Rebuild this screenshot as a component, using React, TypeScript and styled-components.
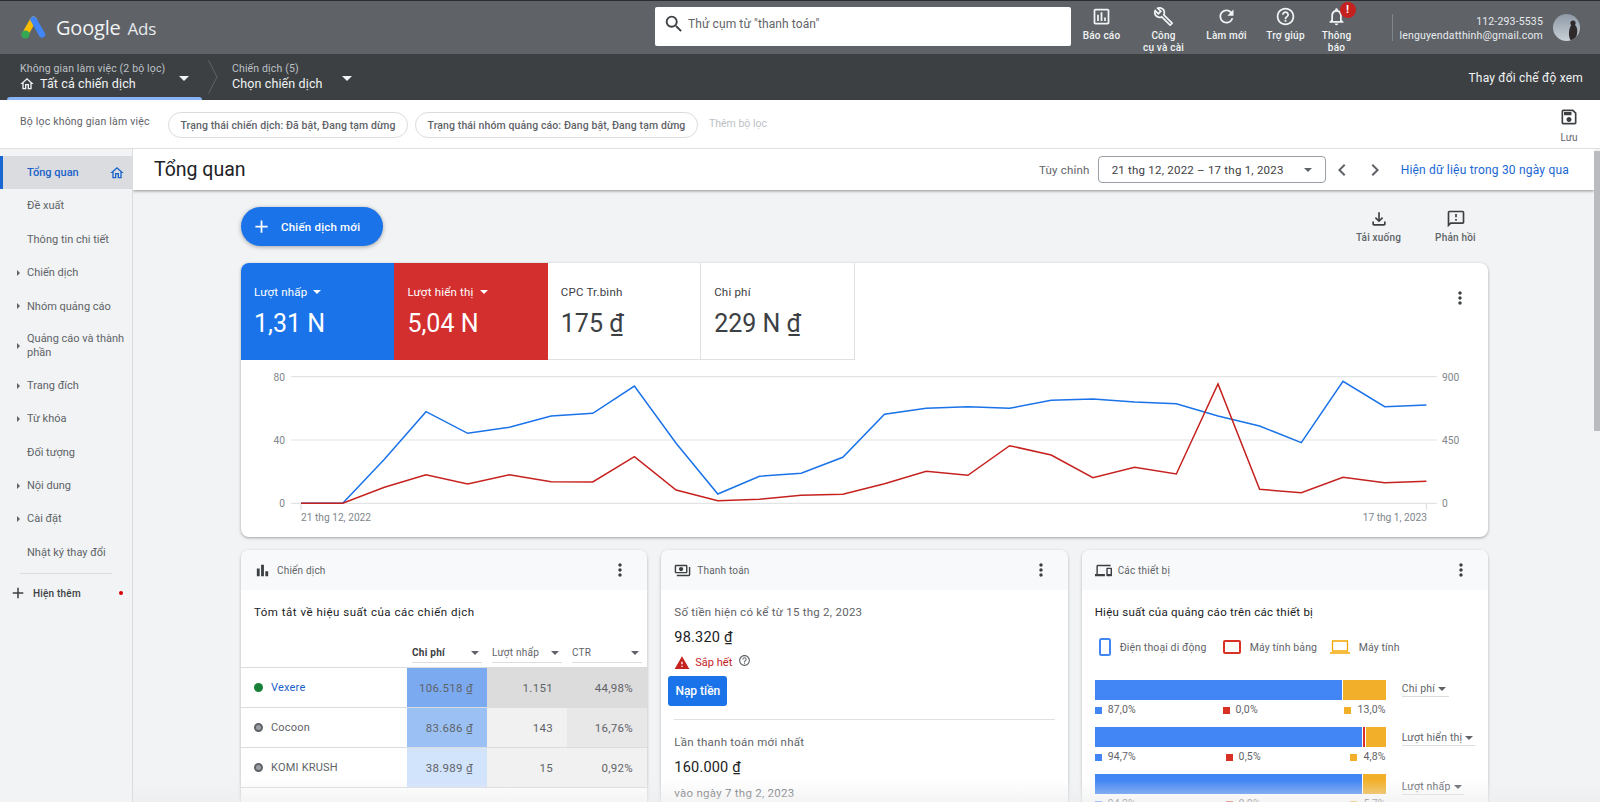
import React from "react";
import styled, { createGlobalStyle } from "styled-components";
import {
  MdOutlineAssessment, MdOutlineBuild, MdRefresh, MdHelpOutline, MdOutlineNotifications,
  MdOutlineSave, MdOutlineHome, MdAdd, MdOutlineFileDownload, MdOutlineFeedback, MdMoreVert,
  MdBarChart, MdOutlinePayments, MdOutlineDevices, MdChevronLeft, MdChevronRight, MdWarning,
  MdSearch,
} from "react-icons/md";

const Global = createGlobalStyle`
  html, body { margin: 0; padding: 0; height: 100%; overflow: hidden; background: #fff; }
  body { font-family: Roboto, "Noto Sans", "Liberation Sans", sans-serif; color: #3c4043; }
  * { box-sizing: border-box; }
`;

const Page = styled.div`
  width: 1600px; height: 802px; display: flex; flex-direction: column; overflow: hidden; position: relative;
`;

/* ---------- top bar ---------- */
const TopBar = styled.header`
  height: 54px; flex: none; display: flex; align-items: stretch; background: #5f6368; border-top: 1px solid #2b2d30; color: #fff;
`;
const Brand = styled.div`
  width: 655px; display: flex; align-items: center; padding-left: 21px; gap: 10px;
`;
const BrandName = styled.span`
  font-family: "Open Sans", Roboto, sans-serif; font-size: 20px; color: #f1f3f4; letter-spacing: -0.2px;
  & > b { font-weight: 400; margin-left: 7px; font-size: 17px; color: #e8eaed; }
`;
const SearchBox = styled.div`
  width: 416px; height: 39px; margin-top: 6px; background: #fff; border-radius: 2px; display: flex; align-items: center;
  padding: 0 0 5px 8px; gap: 3px; font-size: 12px; color: #5f6368; letter-spacing: 0.1px;
  & svg { font-size: 22px; color: #3c4043; }
`;
const ActionItem = styled.div<{ $w: number }>`
  width: ${p => p.$w}px; display: flex; flex-direction: column; align-items: center; text-align: center; padding-top: 5px;
  font-size: 10px; font-weight: 500; line-height: 12px; letter-spacing: 0.2px; color: #f1f3f4; position: relative;
  & > svg { font-size: 21px; margin-bottom: 3px; flex: none; }
`;
const Badge = styled.span`
  position: absolute; top: 1px; left: 50%; margin-left: 3px; width: 16px; height: 16px; border-radius: 50%;
  background: #c5221f; color: #fff; font-size: 11px; font-weight: 700; line-height: 16px; text-align: center;
`;
const VDivider = styled.div`
  width: 1px; height: 27px; background: #80868b; margin: 13px 0 0 32px;
`;
const Account = styled.div`
  width: 150px; margin-top: 14px; text-align: right; font-size: 10.5px; line-height: 13.5px; letter-spacing: 0.17px; color: #e8eaed;
`;
const Avatar = styled.svg`
  width: 27px; height: 27px; margin: 13px 0 0 10px; border-radius: 50%; flex: none;
`;

/* ---------- context bar ---------- */
const ContextBar = styled.div`
  height: 46px; flex: none; display: flex; align-items: stretch; background: #3c4043; color: #f1f3f4; position: relative;
`;
const Crumb = styled.div<{ $w: number; $pad: number }>`
  width: ${p => p.$w}px; padding-left: ${p => p.$pad}px; position: relative; display: flex; flex-direction: column; padding-top: 8px;
`;
const CrumbLabel = styled.span`
  font-size: 10.5px; line-height: 14px; color: #bdc1c6; letter-spacing: 0.15px;
`;
const CrumbValue = styled.span`
  font-size: 12.5px; line-height: 16px; letter-spacing: 0.12px; color: #f1f3f4; display: flex; align-items: center; gap: 5px;
  & svg { font-size: 16px; margin-left: -1px; }
`;
const Caret = styled.span<{ $left: number }>`
  position: absolute; left: ${p => p.$left}px; top: 22px; border: 5px solid transparent; border-top-color: #f1f3f4; border-bottom: 0;
`;
const ActiveTab = styled.span`
  position: absolute; left: 7px; bottom: 0; width: 195px; height: 3px; background: #8ab4f8; border-radius: 3px 3px 0 0;
`;
const CrumbSep = styled.svg`
  width: 10px; height: 34px; margin: 6px 14px 0 3px; flex: none;
`;
const ViewSwitch = styled.div`
  margin-left: auto; padding: 17px 17px 0 0; font-size: 12px; letter-spacing: 0.2px; color: #f1f3f4;
`;

/* ---------- filter bar ---------- */
const FilterBar = styled.div`
  height: 49px; flex: none; display: flex; align-items: flex-start; background: #fff; border-bottom: 1px solid #e0e0e0; position: relative;
`;
const FilterLabel = styled.div`
  font-size: 10.5px; color: #5f6368; padding: 15px 0 0 20px; width: 168px; letter-spacing: 0.2px;
`;
const Chip = styled.div<{ $w: number }>`
  width: ${p => p.$w}px; height: 26px; margin: 12px 7px 0 0; border: 1px solid #dadce0; border-radius: 13px; font-size: 10.5px;
  font-weight: 500; color: #5f6368; display: flex; align-items: center; justify-content: center; white-space: nowrap; letter-spacing: 0.1px;
`;
const AddFilter = styled.div`
  font-size: 10.5px; color: #bdc1c6; padding: 17px 0 0 4px;
`;
const SaveAction = styled.div`
  margin-left: auto; margin-right: 21px; padding-top: 7px; display: flex; flex-direction: column; align-items: center; font-size: 10px; color: #5f6368; gap: 5px;
  & svg { font-size: 20px; color: #3c4043; }
`;

/* ---------- body ---------- */
const Body = styled.div`
  flex: 1; min-height: 0; display: flex;
`;
const Sidebar = styled.nav`
  width: 133px; flex: none; background: #f1f3f4; border-right: 1px solid #dadce0; padding-top: 7px;
`;
const NavRow = styled.div<{ $active?: boolean; $expand?: boolean; $tall?: boolean }>`
  height: ${p => (p.$tall ? 46 : 33.4)}px; display: flex; align-items: center; padding: 0 0 0 27px; position: relative;
  font-size: 11px; line-height: 13.5px;
  color: ${p => (p.$active ? "#1a62c9" : "#5f6368")}; font-weight: ${p => (p.$active ? 500 : 400)};
  background: ${p => (p.$active ? "#dadce0" : "transparent")};
  border-left: ${p => (p.$active ? "3px solid #1967d2" : "0")};
  ${p => p.$active && "padding-left: 24px;"}
  ${p => p.$expand && `&::before { content: ""; position: absolute; left: 17px; top: 50%; margin-top: -3px; border: 3px solid transparent; border-left: 3px solid #5f6368; border-right: 0; }`}
  & svg { position: absolute; right: 7px; font-size: 16px; color: #1a62c9; }
`;
const NavDivider = styled.div`
  height: 1px; background: #dadce0; margin: 4px 20px 0 20px;
`;
const ShowMore = styled.div`
  display: flex; align-items: center; height: 38px; padding-left: 9px; font-size: 10px; font-weight: 500; letter-spacing: 0.2px; color: #3c4043; gap: 6px; position: relative;
  & svg { font-size: 18px; }
`;
const RedDot = styled.span`
  position: absolute; left: 119px; top: 17px; width: 4px; height: 4px; border-radius: 50%; background: #d50000;
`;

const Main = styled.main`
  flex: 1; min-width: 0; display: flex; flex-direction: column; background: #f1f3f4; position: relative; overflow: hidden;
`;
const TitleBar = styled.div`
  height: 41px; flex: none; background: #fff; display: flex; align-items: center; padding: 0 25px 0 21px; box-shadow: 0 1px 3px rgba(60,64,67,.55); position: relative; z-index: 1;
  margin-right: 6px;
`;
const PageTitle = styled.h1`
  margin: 0; font-size: 19.5px; font-weight: 400; color: #202124; flex: 1;
`;
const CustomLabel = styled.span`
  font-size: 11.5px; color: #5f6368; margin-right: 8px; letter-spacing: 0.2px;
`;
const DateBox = styled.div`
  width: 228px; height: 27px; border: 1px solid #9aa0a6; border-radius: 4px; display: flex; align-items: center; padding-left: 13px; font-size: 11.5px; color: #3c4043; position: relative; letter-spacing: 0.22px;
`;
const DateCaret = styled.span`
  position: absolute; right: 13px; top: 11px; border: 4px solid transparent; border-top-color: #5f6368; border-bottom: 0;
`;
const PageArrow = styled.span`
  width: 33px; display: flex; justify-content: center; color: #5f6368; font-size: 24px;
  & svg { display: block; }
`;
const RangeLink = styled.span`
  font-size: 12px; color: #1967d2; margin-left: 9px; letter-spacing: 0.2px;
`;
const Content = styled.div`
  padding: 17px 112px 0 108px;
`;
const ToolRow = styled.div`
  height: 39px; display: flex; align-items: flex-start; margin: 0 -6px 17px 0;
`;
const NewButton = styled.div`
  width: 142px; height: 39px; border-radius: 20px; background: #1a73e8; color: #fff; display: flex; align-items: center; padding-left: 10px; gap: 9px;
  font-size: 11.5px; font-weight: 500; letter-spacing: 0.2px; box-shadow: 0 1px 4px rgba(60,64,67,.45);
  & svg { font-size: 21px; }
`;
const ToolAction = styled.div<{ $w: number; $first?: boolean }>`
  width: ${p => p.$w}px; ${p => p.$first && "margin-left: auto;"} display: flex; flex-direction: column; align-items: center; font-size: 10px; font-weight: 500; color: #5f6368; gap: 3px; margin-top: 2px; letter-spacing: 0.2px;
  & svg { font-size: 20px; color: #3c4043; }
`;
const ChartCard = styled.section`
  height: 274px; background: #fff; border-radius: 8px; box-shadow: 0 1px 3px rgba(60,64,67,.45); overflow: hidden; margin-bottom: 13px;
`;
const TileRow = styled.div`
  display: flex; height: 97px; position: relative;
`;
const Tile = styled.div<{ $bg?: string }>`
  width: 153.4px; padding: 21px 0 0 13px; background: ${p => p.$bg || "#fff"}; color: ${p => (p.$bg ? "#fff" : "#3c4043")};
  border-right: ${p => (p.$bg ? "0" : "1px solid #e0e0e0")}; border-bottom: ${p => (p.$bg ? "0" : "1px solid #e0e0e0")};
`;
const TileLabel = styled.div`
  font-size: 11.5px; line-height: 16px; display: flex; align-items: center; gap: 6px; letter-spacing: 0.2px;
`;
const TileCaret = styled.span`
  border: 4px solid transparent; border-top-color: currentColor; border-bottom: 0;
`;
const TileValue = styled.div`
  font-size: 25px; line-height: 32px; margin-top: 8px; font-weight: 400; color: inherit;
`;
const MoreBtn = styled.span`
  color: #3c4043; font-size: 20px; line-height: 0; margin-left: auto;
  & svg { display: block; }
`;
const TileMenu = styled.div`
  margin-left: auto; padding: 25px 18px 0 0;
`;
const ChartSvg = styled.svg`
  display: block; width: 100%; height: 177px;
`;
const AxisText = styled.text`
  font-family: Roboto, sans-serif; font-size: 10.2px; fill: #80868b;
`;

const CardGrid = styled.div`
  display: grid; grid-template-columns: repeat(3, 1fr); gap: 14px;
`;
const Card = styled.section`
  height: 300px; background: #fff; border-radius: 8px 8px 0 0; box-shadow: 0 1px 3px rgba(60,64,67,.35); overflow: hidden;
`;
const CardHead = styled.div`
  height: 40px; background: #f8f9fa; display: flex; align-items: center; padding: 0 17px 0 13px; gap: 6px; font-size: 10px; color: #5f6368; letter-spacing: 0.2px;
  & > svg { font-size: 17px; color: #3c4043; }
`;
const CardTitle = styled.div<{ $strong?: boolean; $spacing?: number }>`
  font-size: 11.5px; line-height: 16px; color: ${p => (p.$strong ? "#202124" : "#5f6368")}; padding: 14px 13px 0; letter-spacing: ${p => p.$spacing ?? 0.25}px;
`;
const TableHead = styled.div`
  display: grid; grid-template-columns: 166px 80px 80px 80px; margin-top: 24px; height: 24px; border-bottom: 1px solid #dadce0;
`;
const HeadCell = styled.div<{ $bold?: boolean }>`
  margin: 1px 5px 4px; padding-bottom: 2px; border-bottom: 1px solid #dadce0; display: flex; justify-content: space-between; align-items: center; padding-right: 3px;
  font-size: 10px; letter-spacing: 0.25px; color: ${p => (p.$bold ? "#3c4043" : "#5f6368")}; font-weight: ${p => (p.$bold ? 700 : 400)};
  &:first-child { border: 0; }
`;
const TableRow = styled.div`
  display: grid; grid-template-columns: 166px 80px 80px 80px; height: 40px; border-bottom: 1px solid #dadce0;
`;
const NameCell = styled.div<{ $link?: boolean }>`
  display: flex; align-items: center; padding-left: 13px; gap: 8px; font-size: 11px; letter-spacing: 0.2px; color: ${p => (p.$link ? "#1a62c9" : "#5f6368")};
`;
const StatusDot = styled.span<{ $c: string; $ring: boolean }>`
  width: 9px; height: 9px; border-radius: 50%; background: ${p => p.$c}; ${p => p.$ring && "background: #9aa0a6; border: 2px solid #5f6368;"}
`;
const NumCell = styled.div<{ $bg: string }>`
  background: ${p => p.$bg}; display: flex; align-items: center; justify-content: flex-end; padding-right: 14px; font-size: 11.5px; color: #5f6368; letter-spacing: 0.3px;
`;
const Amount = styled.div<{ $top: number }>`
  font-size: 14.5px; line-height: 20px; color: #202124; padding: ${p => p.$top}px 13px 0; letter-spacing: 0.2px;
`;
const AlertRow = styled.div`
  display: flex; align-items: center; padding: 6px 13px 0; height: 23px; font-size: 11px; color: #c5221f; gap: 5px;
  & > svg { font-size: 16px; }
  & > svg:last-child { color: #5f6368; font-size: 13px; margin: -5px 0 0 1px; }
`;
const TopUp = styled.div`
  width: 59px; height: 30px; margin: 5px 0 0 7px; background: #1a73e8; border-radius: 3px; color: #fff; font-size: 12px; font-weight: 500; display: flex; align-items: center; justify-content: center;
`;
const HLine = styled.div`
  height: 1px; background: #e0e0e0; margin: 13px 13px 0;
`;
const Note = styled.div<{ $top: number }>`
  font-size: 11.5px; line-height: 16px; color: #5f6368; padding: ${p => p.$top}px 13px 0; letter-spacing: 0.25px;
`;
const Legend = styled.div`
  display: flex; align-items: center; height: 20px; margin: 17px 0 0 17px; font-size: 10.5px; color: #5f6368; letter-spacing: 0.12px;
  & > svg { flex: none; }
`;
const LegendText = styled.span<{ $w: number }>`
  width: ${p => p.$w}px; margin-left: 9px;
`;
const DeviceList = styled.div`
  padding: 23px 0 0 13px; display: flex; flex-direction: column; gap: 6px;
`;
const DeviceRow = styled.div`
  display: flex; height: 41px; align-items: flex-start;
`;
const BarCol = styled.div`
  width: 291px; flex: none;
`;
const Bar = styled.div`
  display: flex; height: 20px; gap: 1px;
`;
const BarSeg = styled.div<{ $c: string; $w: number }>`
  background: ${p => p.$c}; width: ${p => p.$w}px; flex: none;
`;
const BarLabels = styled.div`
  display: flex; justify-content: space-between; font-size: 10.5px; color: #5f6368; margin-top: 4px; line-height: 12px; letter-spacing: 0.15px;
`;
const BarLabel = styled.span<{ $c: string }>`
  display: flex; align-items: center; gap: 6px;
  &::before { content: ""; width: 7px; height: 7px; background: ${p => p.$c}; }
`;
const MetricPick = styled.div<{ $w: number; $top: number }>`
  width: ${p => p.$w}px; margin: ${p => p.$top}px 0 0 16px; border-bottom: 1px solid #dadce0; font-size: 10.5px; line-height: 15px; color: #5f6368; display: flex; align-items: center; gap: 3px; white-space: nowrap; letter-spacing: 0.2px;
`;
const PickCaret = styled.span`
  border: 4px solid transparent; border-top: 4px solid #5f6368; border-bottom: 0;
`;
const ScrollTrack = styled.div`
  position: absolute; right: 0; top: 0; bottom: 0; width: 6px; background: #f1f3f4; z-index: 2;
`;
const ScrollThumb = styled.div`
  height: 280px; margin-top: 2px; background: #b9bbbe;
`;
const BottomFade = styled.div`
  position: absolute; left: 0; right: 0; bottom: 0; height: 22px; z-index: 3; pointer-events: none;
  background: linear-gradient(to bottom, rgba(241,243,244,0), rgba(236,237,238,.6));
`;

const blue = [430,430,298,155,220,202,168,160,78,250,402,349,340,292,163,145,140,145,121,117,126,131,168,198,248,64,140,135];
const red = [430,430,382,344,372,344,365,366,290,390,422,418,406,403,371,334,346,257,285,353,322,342,72,388,398,352,368,364];
const toPts = (a: number[]) => a.map((v, i) => `${(60 + i * 41.68).toFixed(1)},${(v / 3).toFixed(1)}`).join(" ");

const Logo = () => (
  <svg width="25" height="23" viewBox="0 0 25 23" aria-hidden="true">
    <path d="M12.5 3.5 5 16.5" stroke="#fbbc04" strokeWidth="6.4" strokeLinecap="round" />
    <path d="M12.5 3.5 21 18.5" stroke="#4285f4" strokeWidth="6.4" strokeLinecap="round" />
    <circle cx="4.4" cy="18.4" r="4" fill="#34a853" />
  </svg>
);

const actions = [
  { w: 61, icon: <MdOutlineAssessment />, text: "Báo cáo" },
  { w: 63, icon: <MdOutlineBuild />, text: <>Công<br />cụ và cài</> },
  { w: 63, icon: <MdRefresh />, text: "Làm mới" },
  { w: 55, icon: <MdHelpOutline />, text: "Trợ giúp" },
  { w: 47, icon: <MdOutlineNotifications />, text: <>Thông<br />báo</>, badge: true },
];

const nav = [
  { t: "Tổng quan", active: true },
  { t: "Đề xuất" },
  { t: "Thông tin chi tiết" },
  { t: "Chiến dịch", expand: true },
  { t: "Nhóm quảng cáo", expand: true },
  { t: "Quảng cáo và thành phần", expand: true, tall: true },
  { t: "Trang đích", expand: true },
  { t: "Từ khóa", expand: true },
  { t: "Đối tượng" },
  { t: "Nội dung", expand: true },
  { t: "Cài đặt", expand: true },
  { t: "Nhật ký thay đổi" },
];

const rows = [
  { name: "Vexere", link: true, dot: "#188038", ring: false, cells: [["106.518 ₫", "#7baaf0"], ["1.151", "#dcdcdc"], ["44,98%", "#dcdcdc"]] },
  { name: "Cocoon", dot: "#9aa0a6", ring: true, cells: [["83.686 ₫", "#9bc1f4"], ["143", "#f1f1f1"], ["16,76%", "#e8e8e8"]] },
  { name: "KOMI KRUSH", dot: "#9aa0a6", ring: true, cells: [["38.989 ₫", "#d2e3fc"], ["15", "#f1f1f1"], ["0,92%", "#f1f1f1"]] },
];

const BL = "#4285f4", RD = "#d93025", YL = "#f2b02a";
const devices = [
  { segs: [[BL, 247], [YL, 43]], labels: ["87,0%", "0,0%", "13,0%"], metric: "Chi phí", w: 47, top: 1 },
  { segs: [[BL, 267], [RD, 2], [YL, 20]], labels: ["94,7%", "0,5%", "4,8%"], metric: "Lượt hiển thị", w: 73, top: 3 },
  { segs: [[BL, 267], [YL, 23]], labels: ["94,2%", "0,0%", "5,7%"], metric: "Lượt nhấp", w: 62, top: 5 },
];

export default function App() {
  return (
    <Page>
      <Global />
      <TopBar>
        <Brand>
          <Logo />
          <BrandName>Google<b>Ads</b></BrandName>
        </Brand>
        <SearchBox><MdSearch />Thử cụm từ "thanh toán"</SearchBox>
        {actions.map((a, i) => (
          <ActionItem key={i} $w={a.w}>
            {a.icon}
            <span>{a.text}</span>
            {a.badge && <Badge>!</Badge>}
          </ActionItem>
        ))}
        <VDivider />
        <Account>112-293-5535<br />lenguyendatthinh@gmail.com</Account>
        <Avatar viewBox="0 0 27 27" aria-hidden="true">
          <defs>
            <linearGradient id="av" x1="0" y1="0" x2="0" y2="1">
              <stop offset="0" stopColor="#8d99a6" />
              <stop offset="1" stopColor="#c9d0d6" />
            </linearGradient>
          </defs>
          <rect width="27" height="27" fill="url(#av)" />
          <circle cx="20" cy="9" r="2.6" fill="#2e2a2c" />
          <path d="M20 10c4 1 5 6 4 10-.5 3-2.5 7-4.5 7s-3.5-3-3.5-7c0-4 1-9 4-10z" fill="#2e2a2c" />
        </Avatar>
      </TopBar>

      <ContextBar>
        <Crumb $w={205} $pad={20}>
          <CrumbLabel>Không gian làm việc (2 bộ lọc)</CrumbLabel>
          <CrumbValue><MdOutlineHome />Tất cả chiến dịch</CrumbValue>
          <Caret $left={179} />
          <ActiveTab />
        </Crumb>
        <CrumbSep viewBox="0 0 10 34" aria-hidden="true">
          <path d="M.5.5 9 17 .5 33.5" fill="none" stroke="#5f6368" />
        </CrumbSep>
        <Crumb $w={130} $pad={0}>
          <CrumbLabel>Chiến dịch (5)</CrumbLabel>
          <CrumbValue>Chọn chiến dịch</CrumbValue>
          <Caret $left={110} />
        </Crumb>
        <ViewSwitch>Thay đổi chế độ xem</ViewSwitch>
      </ContextBar>

      <FilterBar>
        <FilterLabel>Bộ lọc không gian làm việc</FilterLabel>
        <Chip $w={240}>Trạng thái chiến dịch: Đã bật, Đang tạm dừng</Chip>
        <Chip $w={283}>Trạng thái nhóm quảng cáo: Đang bật, Đang tạm dừng</Chip>
        <AddFilter>Thêm bộ lọc</AddFilter>
        <SaveAction><MdOutlineSave />Lưu</SaveAction>
      </FilterBar>

      <Body>
        <Sidebar>
          {nav.map(n => (
            <NavRow key={n.t} $active={n.active} $expand={n.expand} $tall={n.tall}>
              <span>{n.t}</span>
              {n.active && <MdOutlineHome />}
            </NavRow>
          ))}
          <NavDivider />
          <ShowMore><MdAdd />Hiện thêm<RedDot /></ShowMore>
        </Sidebar>
        <Main>
          <TitleBar>
            <PageTitle>Tổng quan</PageTitle>
            <CustomLabel>Tùy chỉnh</CustomLabel>
            <DateBox>21 thg 12, 2022 – 17 thg 1, 2023<DateCaret /></DateBox>
            <PageArrow><MdChevronLeft /></PageArrow>
            <PageArrow><MdChevronRight /></PageArrow>
            <RangeLink>Hiện dữ liệu trong 30 ngày qua</RangeLink>
          </TitleBar>
          <Content>
            <ToolRow>
              <NewButton><MdAdd />Chiến dịch mới</NewButton>
              <ToolAction $w={77} $first><MdOutlineFileDownload />Tải xuống</ToolAction>
              <ToolAction $w={77}><MdOutlineFeedback />Phản hồi</ToolAction>
            </ToolRow>
            <ChartCard>
              <TileRow>
                <Tile $bg="#1a73e8"><TileLabel>Lượt nhấp <TileCaret /></TileLabel><TileValue>1,31 N</TileValue></Tile>
                <Tile $bg="#d32f2f"><TileLabel>Lượt hiển thị <TileCaret /></TileLabel><TileValue>5,04 N</TileValue></Tile>
                <Tile><TileLabel>CPC Tr.bình</TileLabel><TileValue>175 ₫</TileValue></Tile>
                <Tile><TileLabel>Chi phí</TileLabel><TileValue>229 N ₫</TileValue></Tile>
                <TileMenu><MoreBtn><MdMoreVert /></MoreBtn></TileMenu>
              </TileRow>
              <ChartSvg viewBox="0 0 1247 177" aria-hidden="true">
                {[16.7, 80, 143.3].map(y => <line key={y} x1="50" x2="1196" y1={y} y2={y} stroke="#e3e4e6" strokeWidth="1.2" />)}
                <line x1="60" x2="60" y1="143" y2="150" stroke="#dadce0" />
                <line x1="1185.4" x2="1185.4" y1="143" y2="150" stroke="#dadce0" />
                <AxisText x="44" y="20.5" textAnchor="end">80</AxisText>
                <AxisText x="44" y="84" textAnchor="end">40</AxisText>
                <AxisText x="44" y="147" textAnchor="end">0</AxisText>
                <AxisText x="1201" y="20.5">900</AxisText>
                <AxisText x="1201" y="84">450</AxisText>
                <AxisText x="1201" y="147">0</AxisText>
                <AxisText x="60" y="161">21 thg 12, 2022</AxisText>
                <AxisText x="1186" y="161" textAnchor="end">17 thg 1, 2023</AxisText>
                <polyline points={toPts(blue)} fill="none" stroke="#1a73e8" strokeWidth="1.5" />
                <polyline points={toPts(red)} fill="none" stroke="#c5221f" strokeWidth="1.5" />
              </ChartSvg>
            </ChartCard>
            <CardGrid>
              <Card>
                <CardHead><MdBarChart />Chiến dịch<MoreBtn><MdMoreVert /></MoreBtn></CardHead>
                <CardTitle $strong $spacing={0.5}>Tóm tắt về hiệu suất của các chiến dịch</CardTitle>
                <TableHead>
                  <HeadCell />
                  <HeadCell $bold>Chi phí<PickCaret /></HeadCell>
                  <HeadCell>Lượt nhấp<PickCaret /></HeadCell>
                  <HeadCell>CTR<PickCaret /></HeadCell>
                </TableHead>
                {rows.map(r => (
                  <TableRow key={r.name}>
                    <NameCell $link={r.link}><StatusDot $c={r.dot} $ring={r.ring} />{r.name}</NameCell>
                    {r.cells.map(c => <NumCell key={c[0]} $bg={c[1]}>{c[0]}</NumCell>)}
                  </TableRow>
                ))}
              </Card>
              <Card>
                <CardHead><MdOutlinePayments />Thanh toán<MoreBtn><MdMoreVert /></MoreBtn></CardHead>
                <CardTitle>Số tiền hiện có kể từ 15 thg 2, 2023</CardTitle>
                <Amount $top={8}>98.320 ₫</Amount>
                <AlertRow><MdWarning />Sắp hết<MdHelpOutline /></AlertRow>
                <TopUp>Nạp tiền</TopUp>
                <HLine />
                <Note $top={14}>Lần thanh toán mới nhất</Note>
                <Amount $top={8}>160.000 ₫</Amount>
                <Note $top={7}>vào ngày 7 thg 2, 2023</Note>
              </Card>
              <Card>
                <CardHead><MdOutlineDevices />Các thiết bị<MoreBtn><MdMoreVert /></MoreBtn></CardHead>
                <CardTitle $strong>Hiệu suất của quảng cáo trên các thiết bị</CardTitle>
                <Legend>
                  <svg width="12" height="18" viewBox="0 0 12 18" aria-hidden="true"><rect x="1" y="1" width="10" height="16" rx="1.5" fill="none" stroke="#4285f4" strokeWidth="2" /></svg>
                  <LegendText $w={103}>Điện thoại di động</LegendText>
                  <svg width="18" height="14" viewBox="0 0 18 14" aria-hidden="true"><rect x="1" y="1" width="16" height="12" rx="1" fill="none" stroke="#d93025" strokeWidth="2" /></svg>
                  <LegendText $w={80}>Máy tính bảng</LegendText>
                  <svg width="20" height="14" viewBox="0 0 20 14" aria-hidden="true"><path d="M2.5 1h15v10h-15zM0 13h20" fill="none" stroke="#f2a600" strokeWidth="1.3" /></svg>
                  <LegendText $w={50}>Máy tính</LegendText>
                </Legend>
                <DeviceList>
                  {devices.map(d => (
                    <DeviceRow key={d.metric}>
                      <BarCol>
                        <Bar>{d.segs.map(s => <BarSeg key={String(s[0])} $c={s[0] as string} $w={s[1] as number} />)}</Bar>
                        <BarLabels>
                          <BarLabel $c={BL}>{d.labels[0]}</BarLabel>
                          <BarLabel $c={RD}>{d.labels[1]}</BarLabel>
                          <BarLabel $c={YL}>{d.labels[2]}</BarLabel>
                        </BarLabels>
                      </BarCol>
                      <MetricPick $w={d.w} $top={d.top}>{d.metric}<PickCaret /></MetricPick>
                    </DeviceRow>
                  ))}
                </DeviceList>
              </Card>
            </CardGrid>
          </Content>
          <ScrollTrack><ScrollThumb /></ScrollTrack>
          <BottomFade />
        </Main>
      </Body>
    </Page>
  );
}
